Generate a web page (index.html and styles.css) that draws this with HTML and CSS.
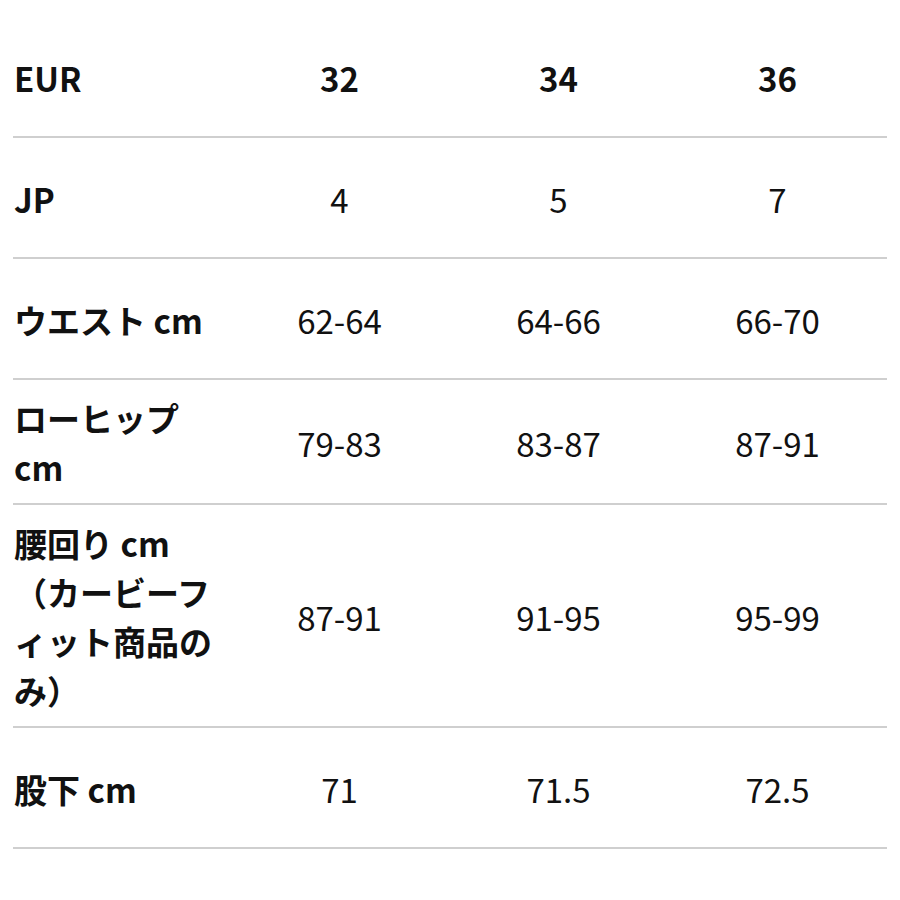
FILE: index.html
```html
<!DOCTYPE html>
<html lang="ja">
<head>
<meta charset="utf-8">
<link rel="stylesheet" href="styles.css">
</head>
<body>
<div class="table">
  <div class="row head">
    <div class="cell label">EUR</div>
    <div class="cell">32</div>
    <div class="cell">34</div>
    <div class="cell">36</div>
  </div>
  <div class="row">
    <div class="cell label">JP</div>
    <div class="cell">4</div>
    <div class="cell">5</div>
    <div class="cell">7</div>
  </div>
  <div class="row">
    <div class="cell label">ウエスト cm</div>
    <div class="cell">62-64</div>
    <div class="cell">64-66</div>
    <div class="cell">66-70</div>
  </div>
  <div class="row">
    <div class="cell label">ローヒップ<br>cm</div>
    <div class="cell">79-83</div>
    <div class="cell">83-87</div>
    <div class="cell">87-91</div>
  </div>
  <div class="row">
    <div class="cell label">腰回り cm<br>（カービーフ<br>ィット商品の<br>み）</div>
    <div class="cell">87-91</div>
    <div class="cell">91-95</div>
    <div class="cell">95-99</div>
  </div>
  <div class="row">
    <div class="cell label">股下 cm</div>
    <div class="cell">71</div>
    <div class="cell">71.5</div>
    <div class="cell">72.5</div>
  </div>
</div>
</body>
</html>
```
FILE: styles.css
```css
html, body {
  margin: 0;
  padding: 0;
  background: #ffffff;
}
body {
  font-family: "Noto Sans CJK JP", "Noto Sans", sans-serif;
  color: #111111;
  font-size: 33px;
  line-height: 49px;
}
.table {
  margin: 0 13px;
  padding-top: 17px;
  width: 874px;
}
.row {
  display: grid;
  grid-template-columns: 217px 1fr 1fr 1fr;
  align-items: center;
  box-sizing: border-box;
  min-height: 121px;
  padding: 14px 0 11px;
  border-bottom: 2px solid #cfcfcf;
}
.cell {
  text-align: center;
  font-weight: 400;
}
.cell.label {
  text-align: left;
  font-weight: 700;
  padding-left: 1px;
}
.head .cell {
  font-weight: 700;
}
```
